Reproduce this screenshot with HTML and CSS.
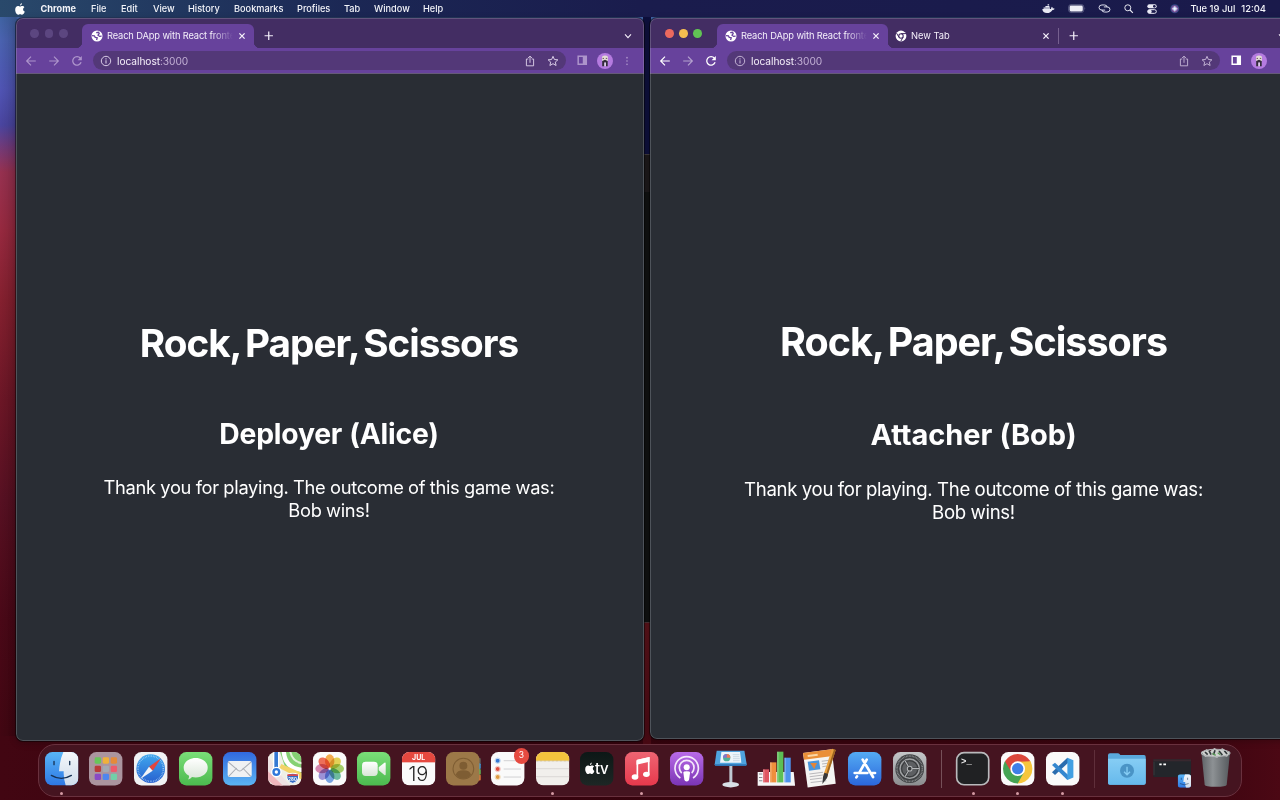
FILE: index.html
```html
<!DOCTYPE html>
<html lang="en">
<head>
<meta charset="utf-8">
<title>Desktop</title>
<link rel="stylesheet" href="styles.css">
</head>
<body>
<svg class="defs" aria-hidden="true">
  <defs>
    <symbol id="globe" viewBox="0 0 12 12"><circle cx="6" cy="6" r="5.5" fill="#fff"/><path d="M1 5.600 3.400 5.800 4.200 7.400 6.200 7.700 5.600 10M5.200 2.600 7.600 2.300 8.200 3.700 7 5.200 8.600 6.400 10.600 6.200" fill="none" stroke="#67429c" stroke-width="1.3"/></symbol>
    <symbol id="chrome-mono" viewBox="0 0 12 12"><circle cx="6" cy="6" r="5.4" fill="#fff"/><circle cx="6" cy="6" r="2.2" fill="#fff" stroke="#432d63" stroke-width="1.1"/><path d="M6 3.6H11M3.9 7.2 1.6 3.2M8.1 7.2 5.8 11.2" stroke="#432d63" stroke-width="1"/></symbol>
    <symbol id="close" viewBox="0 0 8 8"><path d="M1.4 1.4 6.6 6.6M6.6 1.4 1.4 6.6" stroke="currentColor" stroke-width="1.3"/></symbol>
    <symbol id="plus" viewBox="0 0 10 10"><path d="M5 .6V9.4M.6 5H9.4" stroke="currentColor" stroke-width="1.3"/></symbol>
    <symbol id="chevron" viewBox="0 0 8 8"><path d="M1 2.4 4 5.6 7 2.4" fill="none" stroke="currentColor" stroke-width="1.1"/></symbol>
    <symbol id="back" viewBox="0 0 12 12"><path d="M10.8 6H1.8M6 1.7 1.7 6 6 10.3" fill="none" stroke="currentColor" stroke-width="1.2"/></symbol>
    <symbol id="forward" viewBox="0 0 12 12"><path d="M1.2 6H10.2M6 1.7 10.3 6 6 10.3" fill="none" stroke="currentColor" stroke-width="1.2"/></symbol>
    <symbol id="reload" viewBox="0 0 12 12"><path d="M10.1 7.3A4.3 4.3 0 1 1 9.4 3.2" fill="none" stroke="currentColor" stroke-width="1.3"/><path d="M10.8 1V5.2H6.6Z" fill="currentColor"/></symbol>
    <symbol id="info" viewBox="0 0 12 12"><circle cx="6" cy="6" r="4.7" fill="none" stroke="currentColor" stroke-width="1"/><path d="M6 5.3V8.6M6 3.3V4.5" stroke="currentColor" stroke-width="1.1"/></symbol>
    <symbol id="share" viewBox="0 0 12 12"><path d="M4.3 4H2.4V10.8H9.6V4H7.7M6 7.8V1.2M4.1 3 6 1.1 7.9 3" fill="none" stroke="currentColor" stroke-width=".95"/></symbol>
    <symbol id="star" viewBox="0 0 12 12"><path d="M6 1.3 7.4 4.5 10.9 4.8 8.3 7.1 9.1 10.5 6 8.7 2.9 10.5 3.7 7.1 1.1 4.8 4.6 4.5Z" fill="none" stroke="currentColor" stroke-width="1"/></symbol>
    <symbol id="panel" viewBox="0 0 12 12"><path d="M.5 .5H11.500V11.500H.5ZM2.200 2.200V9.800H6.600V2.200Z" fill="currentColor" fill-rule="evenodd"/></symbol>
    <symbol id="avatar" viewBox="0 0 16 16"><circle cx="8" cy="8" r="8" fill="#b57be0"/><path d="M5 5Q5 2.600 8 2.600T11 5L10.800 8H5.200Z" fill="#e4dcd8"/><path d="M5.200 8 8 6.800 10.700 8V13.200H8.800V9.600H7.400V13.200H5.200Z" fill="#332c3a"/><path d="M7.400 9.600H8.800V13.200H7.400Z" fill="#ece7ee"/><path d="M5.600 5.400H7M8.800 5.400H10.200" stroke="#6b5a58"/></symbol>
    <symbol id="dots" viewBox="0 0 12 12"><g fill="currentColor"><circle cx="6" cy="2" r="1"/><circle cx="6" cy="6" r="1"/><circle cx="6" cy="10" r="1"/></g></symbol>
    <symbol id="apple" viewBox="0 0 20 24"><path d="M14 0Q14.2 4.6 10 5.6 9.800 1.400 14 0ZM10.200 7.200C11.500 7.200 12.400 6.100 14.500 6.100 16.500 6.100 18 7.200 18.800 8.400 15 10.500 15.600 15.800 19.600 17.200 18.600 20.200 16.500 23.500 14.400 23.500 12.700 23.500 12.200 22.500 10.300 22.500S7.800 23.500 6.300 23.500C3.500 23.500.4 18.500.4 13.600.4 8.800 3.200 6.200 6 6.200 7.900 6.200 9 7.200 10.200 7.200Z" fill="#fff"/></symbol>
    <symbol id="face" viewBox="0 0 100 100"><rect width="100" height="100" rx="22" fill="url(#gFinder)"/><path d="M55 0Q44 24 42 58H56Q55 80 62 100H78A22 22 0 0 0 100 78V22A22 22 0 0 0 78 0Z" fill="url(#gPale)"/><path d="M27 28V38M74 28V38" stroke="#173254" stroke-width="4" stroke-linecap="round"/><path d="M19 70Q49 88 79 70" fill="none" stroke="#173254" stroke-width="4" stroke-linecap="round"/></symbol>
    <linearGradient id="gFinder" x2="0" y2="1"><stop stop-color="#59b5f7"/><stop offset="1" stop-color="#2e78e4"/></linearGradient>
    <linearGradient id="gPale" x2="0" y2="1"><stop stop-color="#f4f7fb"/><stop offset="1" stop-color="#cfdceb"/></linearGradient>
    <linearGradient id="gSafari" x2="0" y2="1"><stop stop-color="#3fa7ee"/><stop offset="1" stop-color="#2860cf"/></linearGradient>
    <linearGradient id="gGreen" x2="0" y2="1"><stop stop-color="#7ade78"/><stop offset="1" stop-color="#4cba4f"/></linearGradient>
    <linearGradient id="gWhite" x2="0" y2="1"><stop stop-color="#fff"/><stop offset="1" stop-color="#d9e6d8"/></linearGradient>
    <linearGradient id="gMail" x2="0" y2="1"><stop stop-color="#3169e0"/><stop offset="1" stop-color="#5bb4f3"/></linearGradient>
    <linearGradient id="gMusic" x2="0" y2="1"><stop stop-color="#ee6573"/><stop offset="1" stop-color="#e6394c"/></linearGradient>
    <linearGradient id="gPod" x2="0" y2="1"><stop stop-color="#b96be8"/><stop offset="1" stop-color="#7b35b4"/></linearGradient>
    <linearGradient id="gStore" x2="0" y2="1"><stop stop-color="#54abf3"/><stop offset="1" stop-color="#2b67dc"/></linearGradient>
    <linearGradient id="gGrey" x2="0" y2="1"><stop stop-color="#c4c6c8"/><stop offset="1" stop-color="#8c8e90"/></linearGradient>
    <linearGradient id="gTv" x2="0" y2="1"><stop stop-color="#0c1716"/><stop offset="1" stop-color="#1d2725"/></linearGradient>
    <linearGradient id="gFolder" x2="0" y2="1"><stop stop-color="#86cdf4"/><stop offset="1" stop-color="#66b9ec"/></linearGradient>
    <linearGradient id="gBin"><stop stop-color="#5e6266"/><stop offset=".4" stop-color="#8d9194"/><stop offset="1" stop-color="#55595d"/></linearGradient>
    <radialGradient id="gSiri"><stop stop-color="#fff"/><stop offset=".35" stop-color="#a9b8e8"/><stop offset=".65" stop-color="#7a4a90"/><stop offset="1" stop-color="#274a86"/></radialGradient>
    <clipPath id="tile"><rect width="100" height="100" rx="22"/></clipPath>
  </defs>
</svg>

<div class="desktop">
  <header class="menubar">
    <svg class="apple"><use href="#apple"/></svg>
    <nav class="menus">
      <span class="app-name">Chrome</span><span>File</span><span>Edit</span><span>View</span><span>History</span><span>Bookmarks</span><span>Profiles</span><span>Tab</span><span>Window</span><span>Help</span>
    </nav>
    <div class="status">
      <svg class="whale" viewBox="0 0 42 32"><path d="M1 16H29Q30 11 32 9 35 11 35 14 38 13 41 15 39 19 34 19 28 29 16 29 2 29 1 16Z" fill="#e8e9f3"/><path d="M5 11H26V15H5ZM11 6H24V10H11ZM18 1H23V5H18Z" fill="#e8e9f3"/></svg>
      <svg class="battery" viewBox="0 0 54 28"><rect x="1" y="2" width="47" height="24" rx="7" fill="none" stroke="#777a9c" stroke-width="2"/><rect x="4" y="5" width="41" height="18" rx="4" fill="#eeeef6"/><path d="M51 10Q54 14 51 18Z" fill="#777a9c"/></svg>
      <svg class="link" viewBox="0 0 40 28"><path d="M22 19H12Q3 19 3 11T12 3H20Q28 3 28 10M18 9H28Q37 9 37 17T28 25H20Q12 25 12 18" fill="none" stroke="#e3e4f2" stroke-width="3"/></svg>
      <svg class="search" viewBox="0 0 30 30"><circle cx="12" cy="12" r="9.500" fill="none" stroke="#eeeef6" stroke-width="3"/><path d="M19 19 28 28" stroke="#eeeef6" stroke-width="3.500"/></svg>
      <svg class="control" viewBox="0 0 30 30"><rect x="1" y="1" width="28" height="12" rx="6" fill="#e9eaf5"/><circle cx="22" cy="7" r="4" fill="#1a1a4c"/><rect x="2" y="17" width="26" height="11" rx="5.500" fill="none" stroke="#e9eaf5" stroke-width="3"/><circle cx="8" cy="22.500" r="6" fill="#e9eaf5"/></svg>
      <svg class="siri" viewBox="0 0 30 30"><circle cx="15" cy="15" r="14" fill="url(#gSiri)"/><path d="M15 6V24M6 15H24" stroke="#fff" stroke-width="2.500" opacity=".7"/></svg>
      <time class="clock"><span>Tue 19 Jul</span><span>12:04</span></time>
    </div>
  </header>

  <div class="behind"></div>

  <section class="window alice">
    <div class="tabstrip">
      <div class="lights"><i></i><i></i><i></i></div>
      <div class="tab"><svg class="fav"><use href="#globe"/></svg><span class="tab-title">Reach DApp with React frontend</span><svg class="x"><use href="#close"/></svg></div>
      <svg class="new"><use href="#plus"/></svg>
      <svg class="more"><use href="#chevron"/></svg>
    </div>
    <div class="toolbar">
      <svg class="nav"><use href="#back"/></svg><svg class="nav"><use href="#forward"/></svg><svg class="nav"><use href="#reload"/></svg>
      <div class="omnibox"><svg><use href="#info"/></svg><span class="url">localhost<b>:3000</b></span><svg class="share"><use href="#share"/></svg><svg><use href="#star"/></svg></div>
      <svg class="panel"><use href="#panel"/></svg><svg class="avatar"><use href="#avatar"/></svg><svg class="kebab"><use href="#dots"/></svg>
    </div>
    <main class="page">
      <h1>Rock, Paper, Scissors</h1>
      <h2>Deployer (Alice)</h2>
      <p>Thank you for playing. The outcome of this game was:<br>Bob wins!</p>
    </main>
  </section>

  <section class="window bob">
    <div class="tabstrip">
      <div class="lights"><i></i><i></i><i></i></div>
      <div class="tab"><svg class="fav"><use href="#globe"/></svg><span class="tab-title">Reach DApp with React frontend</span><svg class="x"><use href="#close"/></svg></div>
      <div class="tab idle"><svg class="fav"><use href="#chrome-mono"/></svg><span class="tab-title">New Tab</span><svg class="x"><use href="#close"/></svg></div>
      <svg class="new"><use href="#plus"/></svg>
      <svg class="more"><use href="#chevron"/></svg>
    </div>
    <div class="toolbar">
      <svg class="nav"><use href="#back"/></svg><svg class="nav dim"><use href="#forward"/></svg><svg class="nav"><use href="#reload"/></svg>
      <div class="omnibox"><svg><use href="#info"/></svg><span class="url">localhost<b>:3000</b></span><svg class="share"><use href="#share"/></svg><svg><use href="#star"/></svg></div>
      <svg class="panel"><use href="#panel"/></svg><svg class="avatar"><use href="#avatar"/></svg><svg class="kebab"><use href="#dots"/></svg>
    </div>
    <main class="page">
      <h1>Rock, Paper, Scissors</h1>
      <h2>Attacher (Bob)</h2>
      <p>Thank you for playing. The outcome of this game was:<br>Bob wins!</p>
    </main>
  </section>

  <footer class="dock">
    <div class="app running"><svg><use href="#face"/></svg></div>
    <div class="app"><svg viewBox="0 0 100 100"><rect width="100" height="100" rx="22" fill="#ab959f"/><g><rect x="17" y="16" width="19" height="19" rx="4" fill="#67c65a"/><rect x="41" y="16" width="19" height="19" rx="4" fill="#f0b13b"/><rect x="65" y="16" width="19" height="19" rx="4" fill="#e58a3a"/><rect x="17" y="41" width="19" height="19" rx="4" fill="#b93a3a"/><rect x="41" y="41" width="19" height="19" rx="4" fill="#a3a9b2"/><rect x="65" y="41" width="19" height="19" rx="4" fill="#ee5a6c"/><rect x="17" y="65" width="19" height="19" rx="4" fill="#8a49c5"/><rect x="41" y="65" width="19" height="19" rx="4" fill="#4f86ee"/><rect x="65" y="65" width="19" height="19" rx="4" fill="#72cfa8"/></g></svg></div>
    <div class="app"><svg viewBox="0 0 100 100"><rect width="100" height="100" rx="22" fill="#f1f2f4"/><circle cx="50" cy="50" r="43" fill="url(#gSafari)"/><circle cx="50" cy="50" r="38" fill="none" stroke="#b6dcf8" stroke-width="5" stroke-dasharray="1.500 3.500"/><path d="M81 19 56 56 45 44Z" fill="#e2453d"/><path d="M19 81 45 44 56 56Z" fill="#f3f4f7"/></svg></div>
    <div class="app"><svg viewBox="0 0 100 100"><rect width="100" height="100" rx="22" fill="url(#gGreen)"/><path d="M50 18C70 18 86 30 86 47S70 76 50 76Q44 76 39 75 35 81 27 82 31 77 30 71 14 63 14 47C14 30 30 18 50 18Z" fill="url(#gWhite)"/></svg></div>
    <div class="app"><svg viewBox="0 0 100 100"><rect width="100" height="100" rx="22" fill="url(#gMail)"/><rect x="14" y="27" width="72" height="48" rx="6" fill="#f0f1f3"/><path d="M17 73 41 48M83 73 59 48M16 30 45 55Q50 59 55 55L84 30" fill="none" stroke="#a9adb5" stroke-width="3"/></svg></div>
    <div class="app"><svg viewBox="0 0 100 100"><g clip-path="url(#tile)"><rect width="100" height="100" fill="#eef0e6"/><path d="M36 0H100V70Q62 70 50 42Z" fill="#85d173"/><path d="M47-4Q50 50 104 54" fill="none" stroke="#fff" stroke-width="13"/><path d="M66-4Q72 30 104 34" fill="none" stroke="#dff3d6" stroke-width="6"/><path d="M0 10 30 60 70 104H40L0 70Z" fill="#efe2e3"/><path d="M0 58 48 104H22L0 84Z" fill="#f0b7bd"/><path d="M34 48 104 84V64L40 36Z" fill="#f3d467"/><rect x="15" width="18" height="66" fill="#fff"/><rect x="19" width="11" height="60" fill="#3478d3"/><circle cx="25" cy="60" r="16" fill="#fff"/><circle cx="25" cy="60" r="12" fill="#2f77da"/><circle cx="25" cy="60" r="5" fill="#fff"/><path d="M57 68Q74 60 91 68 95 88 74 94 53 88 57 68Z" fill="#346cc4" stroke="#fff" stroke-width="3"/><path d="M58 67H90V72H58Z" fill="#d9474d"/></g><text x="61" y="86" class="shield">280</text></svg></div>
    <div class="app"><svg viewBox="0 0 100 100"><rect width="100" height="100" rx="22" fill="#fbfbfb"/><g class="petals"><ellipse cx="50" cy="27" rx="14" ry="20" fill="#f2a33c"/><ellipse cx="50" cy="27" rx="14" ry="20" fill="#e0cd45" transform="rotate(45 50 50)"/><ellipse cx="50" cy="27" rx="14" ry="20" fill="#9bc95a" transform="rotate(90 50 50)"/><ellipse cx="50" cy="27" rx="14" ry="20" fill="#5fb597" transform="rotate(135 50 50)"/><ellipse cx="50" cy="27" rx="14" ry="20" fill="#6a9ae0" transform="rotate(180 50 50)"/><ellipse cx="50" cy="27" rx="14" ry="20" fill="#9287d4" transform="rotate(225 50 50)"/><ellipse cx="50" cy="27" rx="14" ry="20" fill="#d27ba7" transform="rotate(270 50 50)"/><ellipse cx="50" cy="27" rx="14" ry="20" fill="#ec6048" transform="rotate(315 50 50)"/></g></svg></div>
    <div class="app"><svg viewBox="0 0 100 100"><rect width="100" height="100" rx="22" fill="url(#gGreen)"/><rect x="15" y="29" width="47" height="43" rx="11" fill="url(#gWhite)"/><path d="M65 46 82 32Q86 30 86 35V66Q86 71 82 69L65 55Z" fill="url(#gWhite)"/></svg></div>
    <div class="app"><svg viewBox="0 0 100 100"><g clip-path="url(#tile)"><rect width="100" height="100" fill="#fafafa"/><rect width="100" height="31" fill="#e5483f"/></g><text x="50" y="24" class="cal-month">JUL</text><text x="49" y="86" class="cal-day">19</text></svg></div>
    <div class="app"><svg viewBox="0 0 100 100"><rect x="70" y="18" width="34" height="17" rx="3" fill="#61605a"/><rect x="70" y="34" width="34" height="17" rx="3" fill="#3e9cda"/><rect x="70" y="51" width="34" height="17" rx="3" fill="#63bb58"/><rect x="70" y="68" width="34" height="17" rx="3" fill="#dc783b"/><rect width="100" height="100" rx="22" fill="#9c7848"/><g fill="none" stroke="#7e5d33" stroke-width="3"><circle cx="52" cy="50" r="31"/></g><circle cx="52" cy="41" r="12" fill="#7e5d33"/><path d="M29 68Q33 55 52 55T75 68Q66 80 52 80T29 68Z" fill="#7e5d33"/></svg></div>
    <div class="app"><svg viewBox="0 0 100 100"><rect width="100" height="100" rx="22" fill="#fafafa"/><path d="M38 26H90M38 51H90M38 75H90" stroke="#c9c9cc" stroke-width="2.500"/><g fill="none" stroke-width="2"><circle cx="20" cy="26" r="8" stroke="#9fc2ec"/><circle cx="20" cy="51" r="8" stroke="#efa59d"/><circle cx="20" cy="75" r="8" stroke="#edcf9c"/></g><circle cx="20" cy="26" r="6" fill="#3577d3"/><circle cx="20" cy="51" r="6" fill="#df4b3e"/><circle cx="20" cy="75" r="6" fill="#df9a40"/></svg><span class="badge">3</span></div>
    <div class="app running"><svg viewBox="0 0 100 100"><g clip-path="url(#tile)"><rect width="100" height="100" fill="#f1efec"/><rect width="100" height="26" fill="#f3c33d"/><path d="M0 27H100" stroke="#b59a54" stroke-width="2" stroke-dasharray="2 2"/><path d="M0 50H100M0 74H100" stroke="#cfccca" stroke-width="2"/></g></svg></div>
    <div class="app"><svg viewBox="0 0 100 100"><rect width="100" height="100" rx="22" fill="url(#gTv)"/><svg x="15" y="31" width="29" height="36"><use href="#apple"/></svg><text x="45" y="66" class="tv">tv</text></svg></div>
    <div class="app running"><svg viewBox="0 0 100 100"><rect width="100" height="100" rx="22" fill="url(#gMusic)"/><path d="M37 26 71 18V65M37 26V73" fill="none" stroke="#fff" stroke-width="5"/><path d="M34.500 24 73.500 15V29L34.500 38Z" fill="#fff"/><ellipse cx="30" cy="75" rx="10" ry="8" fill="#fff"/><ellipse cx="64" cy="67" rx="10" ry="8" fill="#fff"/></svg></div>
    <div class="app"><svg viewBox="0 0 100 100"><rect width="100" height="100" rx="22" fill="url(#gPod)"/><g fill="none" stroke="#f4e8fb" stroke-width="5"><path d="M31 78A35 35 0 1 1 69 78"/><path d="M35 63A22 22 0 1 1 65 63"/></g><circle cx="50" cy="46" r="9" fill="#fff"/><path d="M40 62Q40 58 50 58T60 62L57 83Q56 88 50 88T43 83Z" fill="#fff"/></svg></div>
    <div class="app"><svg viewBox="0 0 100 100"><path d="M46 40H55V94H46Z" fill="#bfc9d2"/><ellipse cx="50" cy="98" rx="25" ry="8" fill="#d9e0e6"/><path d="M8-4H91L98 37Q98 41 94 41H6Q2 41 2 37Z" fill="#4fa4df"/><path d="M2 37H98Q98 42 94 42H6Q2 42 2 37Z" fill="#2c73b4"/><path d="M22 0H78L82 32H18Z" fill="#eef5fb"/><circle cx="38" cy="17" r="11" fill="#4fb29a"/><path d="M38 17V6A11 11 0 0 1 49 17Z" fill="#ee7a59"/><path d="M38 17H27A11 11 0 0 1 38 6Z" fill="#8b72cc"/><path d="M56 8H76M57 14H76M57 20H77M57 26H77" stroke="#b8ccda" stroke-width="2"/></svg></div>
    <div class="app"><svg viewBox="0 0 100 100"><path d="M-4 60 104 60 108 101H-4Z" fill="#f6f6f7"/><path d="M0 66H10M0 76H10M0 86H10" stroke="#8a8b92" stroke-width="3"/><rect x="12" y="52" width="18" height="39" fill="#df5561"/><rect x="33" y="31" width="19" height="60" fill="#ef8f3c"/><rect x="54" y="-1" width="19" height="92" fill="#5cbf55"/><rect x="76" y="17" width="19" height="74" fill="#4c93ec"/><path d="M12 52H17V91H12ZM33 31H38V91H33ZM54-1H59V91H54ZM76 17H81V91H76Z" fill="#fff" opacity=".22"/></svg></div>
    <div class="app"><svg viewBox="0 0 100 100"><path d="M0 3 86-8 98 95 14 106Z" fill="#f5f4f2"/><path d="M0 3 86-8 89 12 3 23Z" fill="#ea8f38"/><path d="M14 12 44 8" stroke="#fbd6a5" stroke-width="6"/><path d="M14 29 48 25 52 52 18 56Z" fill="#4a95db"/><path d="M22 33H42L37 43 34 51 28 43Z" fill="#e2853a"/><path d="M56 28 80 25M57 36 74 34M58 44 70 42M19 66 60 61M20 74 60 69M21 82 58 78M23 91 70 86" stroke="#b9b8bb" stroke-width="3"/><path d="M87-10 98-6 72 75 61 70Z" fill="#e9a03d"/><path d="M93-8 98-6 72 75 67 73Z" fill="#9c6420"/><path d="M64 62 75 66 72 78 58 96 60 74Z" fill="#38383b"/></svg></div>
    <div class="app"><svg viewBox="0 0 100 100"><rect width="100" height="100" rx="22" fill="url(#gStore)"/><g stroke="#fff" stroke-width="8" stroke-linecap="round" fill="none"><path d="M44 23 75 75M56 23 34 62M20 63H58M73 63H81M27 73 25 76"/></g></svg></div>
    <div class="app"><svg viewBox="0 0 100 100"><rect width="100" height="100" rx="22" fill="url(#gGrey)"/><circle cx="50" cy="50" r="43" fill="#3f4143"/><circle cx="50" cy="50" r="38" fill="none" stroke="#8a8c8e" stroke-width="5" stroke-dasharray="2.500 2"/><circle cx="50" cy="50" r="29" fill="#5d5f62" stroke="#a2a4a6" stroke-width="4"/><circle cx="50" cy="50" r="24" fill="none" stroke="#36383a" stroke-width="3"/><path d="M50 50H78M50 50 36 26M50 50 36 74" stroke="#36383a" stroke-width="7"/><path d="M50 50H78M50 50 36 26M50 50 36 74" stroke="#b4b6b8" stroke-width="3.500"/><circle cx="50" cy="50" r="7" fill="#36383a" stroke="#b4b6b8" stroke-width="3"/></svg></div>
    <div class="divider"></div>
    <div class="app running"><svg viewBox="0 0 100 100"><rect x="2" y="2" width="96" height="96" rx="22" fill="#202123" stroke="#b9babc" stroke-width="5"/><text x="15" y="35" class="prompt">&gt;_</text></svg></div>
    <div class="app running"><svg viewBox="0 0 100 100"><rect width="100" height="100" rx="22" fill="#fbfbfb"/><path d="M50 50 11.900 28A44 44 0 0 1 88.100 28Z" fill="#dc483c"/><path d="M50 50 88.100 28A44 44 0 0 1 50 94Z" fill="#f6c63d"/><path d="M50 50 50 94A44 44 0 0 1 11.900 28Z" fill="#46a454"/><path d="M50 28H88.100L80 50 69 61 50 94 48 70Z" fill="#f6c63d"/><path d="M12 28 31 61 50 70 69 61 50 94 14 72Z" fill="#46a454"/><path d="M12 28H88L50 30 31 60Z" fill="#dc483c"/><circle cx="50" cy="50" r="22" fill="#fff"/><circle cx="50" cy="50" r="17" fill="#3f7fe8"/></svg></div>
    <div class="app running"><svg viewBox="0 0 100 100"><rect width="100" height="100" rx="22" fill="#fafafa"/><path d="M18 61 64 17 72 27 27 69Z" fill="#2a6cae"/><path d="M18 39 27 32 72 74 64 84Z" fill="#3487cf"/><path d="M64 17 82 25V76L64 84Z" fill="#419fe2"/></svg></div>
    <div class="divider faint"></div>
    <div class="app"><svg viewBox="0 0 100 100"><path d="M-6 10Q-6 4 0 4H24Q28 4 31 9H102Q107 9 107 15V92Q107 98 101 98H0Q-6 98-6 92Z" fill="#5aa9dc"/><path d="M-6 20H107V92Q107 98 101 98H0Q-6 98-6 92Z" fill="url(#gFolder)"/><circle cx="51" cy="56" r="21" fill="#4a94c6"/><path d="M51 44V67M42 59 51 68 60 59" fill="none" stroke="#86cdf4" stroke-width="4"/></svg></div>
    <div class="app"><svg viewBox="0 0 100 100"><rect x="-5" y="22" width="113" height="53" fill="#23262b"/><rect x="-5" y="22" width="113" height="6" fill="#38282f"/><path d="M13 37H20M25 37H33" stroke="#fff" stroke-width="5"/><path d="M-3 29V70" stroke="#38383c" stroke-width="3"/><svg x="68" y="67" width="40" height="40"><use href="#face"/></svg></svg></div>
    <div class="app"><svg viewBox="0 0 100 100"><path d="M7 0 93 0 83 98Q82 104 50 104T17 98Z" fill="url(#gBin)"/><path d="M8 1 22-8 34-3 46-12 58-5 70-11 82-4 92 2 84 14 66 10 54 17 38 11 18 14Z" fill="#cfd1cf"/><path d="M18 0 26 8M30-4 36 8M48-5 43 9M60-3 70 9M76-4 84 6" stroke="#33393b" stroke-width="5"/><path d="M40 4 50 10M56 2 64 8" stroke="#5c9c5a" stroke-width="4"/><ellipse cx="50" cy="3" rx="43" ry="11" fill="none" stroke="#b2b5b7" stroke-width="3"/></svg></div>
  </footer>
</div>
</body>
</html>
```
FILE: styles.css
```css
* { box-sizing: border-box; }

body {
  margin: 0;
  font-family: Inter, "Liberation Sans", sans-serif;
}

svg { display: block; flex: none; overflow: visible; }
.defs { position: absolute; width: 0; height: 0; }

.desktop {
  position: relative;
  display: flex;
  flex-direction: column;
  justify-content: space-between;
  width: 1280px;
  height: 800px;
  overflow: hidden;
  background:
    linear-gradient(90deg, transparent, rgba(0, 0, 0, .15) 16px, transparent 18px),
    linear-gradient(#39649a 0, #4a62b0 40px, #5054b4 90px, #4a45a0 125px, #743a78 148px, #973150 172px, #97293f 230px, #85202f 300px, #6c1626 400px, #571022 500px, #4a0817 620px, #420612 730px, #3c0611 800px);
}

/* Menu bar */
.menubar {
  display: flex;
  align-items: center;
  height: 17px;
  padding: 0 14px 0 15px;
  background: linear-gradient(90deg, #29496b, #21375f 180px, #1b2754 350px, #1a1c4d 640px, #1a1a4b);
  color: #f3f4f9;
  font-size: 9.2px;
  font-weight: 500;
}
.apple { width: 10px; height: 12px; margin-right: 15.5px; }
.menus {
  display: grid;
  grid-template-columns: 50.5px 30px 32px 35px 46px 63px 47px 30px 49px 40px;
  white-space: nowrap;
}
.app-name { font-weight: 700; }
.status { display: flex; align-items: center; margin-left: auto; }
.whale { width: 13px; height: 10px; margin-right: 13px; }
.battery { width: 18px; height: 9px; margin-right: 12px; }
.link { width: 13px; height: 9px; margin-right: 13px; }
.search { width: 9.500px; height: 9.500px; margin-right: 13.500px; }
.control { width: 10px; height: 10px; margin-right: 12.500px; }
.siri { width: 9.500px; height: 9.500px; margin-right: 11.500px; }
.clock { display: flex; gap: 6px; font-size: 9.400px; white-space: nowrap; }

/* Terminal seen in the gap between the browser windows */
.behind {
  position: absolute;
  left: 643px;
  top: 17px;
  width: 8px;
  height: 727px;
  background: linear-gradient(#0e103c 0 137px, #403a3d 137px 138px, #1d191b 138px 175px, #101111 175px 605px, #4a3134 605px 606px, #581219 606px, #4a0a14 727px);
}

/* Browser windows */
.window {
  position: absolute;
  top: 18px;
  display: flex;
  flex-direction: column;
  border-radius: 7px;
  overflow: hidden;
  background: #292d34;
  box-shadow: 0 0 0 1px rgba(0, 0, 0, .45), 0 2px 7px rgba(0, 0, 0, .25);
}
.window::after {
  content: "";
  position: absolute;
  inset: 0;
  border: 1px solid rgba(190, 200, 205, .25);
  border-radius: 7px;
}
.alice { left: 16px; width: 628px; height: 723px; }
.bob { left: 650px; width: 654px; height: 721px; }

.tabstrip {
  display: flex;
  align-items: center;
  height: 30px;
  padding-top: 6px;
  background: #432d63;
  color: #f4effa;
}
.lights { display: flex; gap: 5.500px; width: 66px; padding: 0 0 5px 14.400px; }
.lights i { width: 8.800px; height: 8.800px; border-radius: 50%; background: #5c4680; }
.bob .lights { width: 66.500px; padding-left: 14.900px; }
.bob .lights i:nth-child(1) { background: #ec695e; }
.bob .lights i:nth-child(2) { background: #f4bd50; }
.bob .lights i:nth-child(3) { background: #61c354; }
.tab {
  position: relative;
  display: flex;
  align-items: center;
  width: 171.500px;
  height: 24px;
  padding: 0 8px 1px 8.500px;
  border-radius: 6px 6px 0 0;
  background: #67429c;
  font-size: 9.300px;
  letter-spacing: -.13px;
}
.bob .tab { width: 171px; padding-left: 8px; }
.tab:not(.idle)::before,
.tab:not(.idle)::after {
  content: "";
  position: absolute;
  bottom: 0;
  width: 5px;
  height: 5px;
}
.tab::before { left: -5px; background: radial-gradient(circle at 0 0, transparent 4.700px, #67429c 5px); }
.tab::after { right: -5px; background: radial-gradient(circle at 100% 0, transparent 4.700px, #67429c 5px); }
.fav { width: 12px; height: 12px; margin-right: 4.500px; }
.tab-title {
  flex: 1;
  overflow: hidden;
  white-space: nowrap;
  -webkit-mask-image: linear-gradient(90deg, #000 105px, transparent 126px);
  mask-image: linear-gradient(90deg, #000 105px, transparent 126px);
}
.x { width: 8px; height: 8px; margin-left: 5px; }
.bob .idle { height: 16px; padding: 0 8px 0 7px; border-right: 1px solid #76608f; border-radius: 0; background: none; margin-bottom: 1px; letter-spacing: 0; }
.new { width: 9.500px; height: 9.500px; margin-left: 10.500px; }
.more { width: 8px; height: 8px; margin: 0 12px 0 auto; }
.bob .more { margin-right: 18px; }

.toolbar {
  display: flex;
  align-items: center;
  height: 26px;
  padding: 0 0 1px 9px;
  background: #67429c;
  color: #ad94cb;
}
.bob .toolbar { color: #fff; }
.nav { width: 12px; height: 12px; margin-right: 11px; }
.dim { opacity: .5; }
.omnibox {
  display: flex;
  align-items: center;
  width: 473px;
  height: 19px;
  margin-left: -1px;
  padding: 0 7px 0 7px;
  border-radius: 10px;
  background: #533878;
  color: #d8cbe5;
}
.bob .omnibox { width: 493px; color: #c1b0d2; }
.omnibox svg { width: 12px; height: 12px; }
.url { margin: 0 auto 0 5px; color: #f5f0fa; font-size: 10.200px; letter-spacing: -.06px; }
.url b { color: #c0aed3; font-weight: 400; }
.omnibox .share { margin-right: 11px; }
.panel { width: 10.500px; height: 10.500px; margin-left: 10.500px; }
.avatar { width: 16px; height: 16px; margin-left: 9.700px; }
.kebab { width: 10px; height: 10px; margin-left: 9.500px; }

.page {
  flex: 1;
  margin-top: -1px;
  border-top: 1px solid #665a79;
  color: #fff;
  text-align: center;
  white-space: nowrap;
}
h1, h2, p { margin: 0; }
.alice .page { padding: 245px 2px 0 0; }
h1 { font-size: 38.700px; line-height: 48px; letter-spacing: -1px; word-spacing: -3.500px; }
h2 { margin-top: 50px; font-size: 28.300px; line-height: 34px; letter-spacing: -.2px; word-spacing: .5px; }
p { margin-top: 25px; font-size: 18.300px; line-height: 23px; letter-spacing: -.3px; word-spacing: -.3px; }
.bob .page { padding: 243.500px 7px 0 0; }
.bob h1 { font-size: 39.500px; }
.bob h2 { margin-top: 52px; font-size: 29px; letter-spacing: -.05px; }
.bob p { margin-top: 26px; font-size: 18.600px; line-height: 23.500px; }

/* Dock */
.dock {
  position: relative;
  display: flex;
  align-items: center;
  width: 1204px;
  height: 53px;
  margin: 0 0 3px 38px;
  padding: 0 0 3px .2px;
  border: 1px solid #69313e;
  border-radius: 17px;
  background: #451420;
}
.desktop::before {
  content: "";
  position: absolute;
  left: 0;
  right: 0;
  bottom: 0;
  height: 64px;
  background: linear-gradient(90deg, #420612, #35030d 500px, #3d0510 1200px, #4b0814);
}
.app {
  position: relative;
  display: flex;
  justify-content: center;
  width: 44.640px;
}
.app > svg { width: 33.400px; height: 33.400px; }
.running::after {
  content: "";
  position: absolute;
  left: 21px;
  top: 40px;
  width: 3px;
  height: 3px;
  border-radius: 50%;
  background: #d49aa3;
}
.divider { width: 1px; height: 38px; margin: 0 9px; background: #765059; }
.faint { margin: 0 9.500px; background: #5f2f3a; }
.badge {
  position: absolute;
  right: 1px;
  top: -4px;
  width: 15.500px;
  height: 15.500px;
  border-radius: 50%;
  background: #e64a40;
  color: #fff;
  font-size: 8.500px;
  line-height: 15.500px;
  text-align: center;
}

.petals { opacity: .9; }
.petals ellipse { mix-blend-mode: multiply; }
.shield { fill: #fff; font-size: 13px; font-weight: 700; }
.cal-month { fill: #fff; font-size: 21px; font-weight: 700; text-anchor: middle; }
.cal-day { fill: #262626; font-size: 60px; font-weight: 300; text-anchor: middle; }
.tv { fill: #fff; font-size: 45px; font-weight: 500; letter-spacing: -1px; }
.prompt { fill: #eee; font-family: "Liberation Mono", monospace; font-size: 27px; font-weight: 700; }
```
